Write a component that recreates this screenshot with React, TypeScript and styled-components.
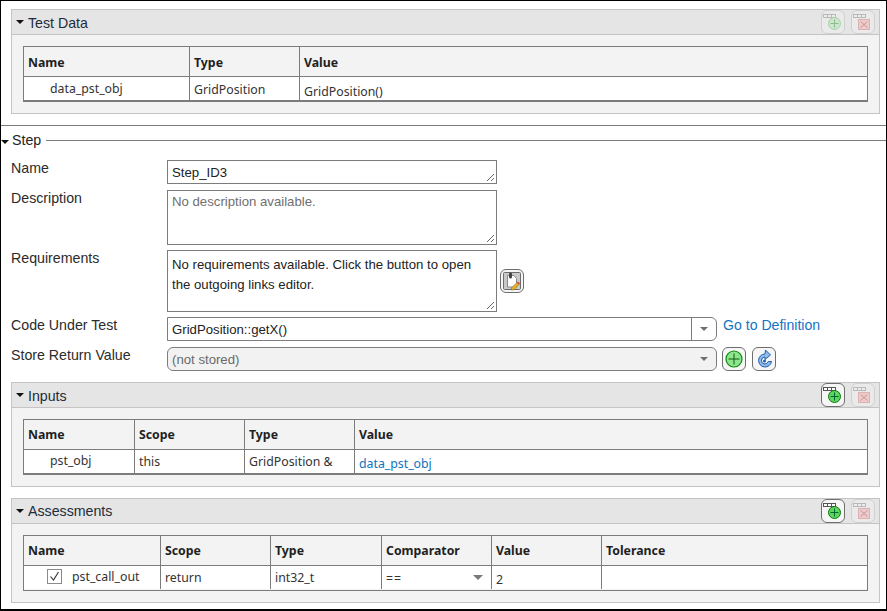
import React from "react";
import styled, { createGlobalStyle } from "styled-components";

const Global = createGlobalStyle`
  html, body { margin: 0; padding: 0; background: #fff; }
  body { font-family: "Liberation Sans", Arial, sans-serif; font-size: 14px; color: #212121; }
  * { box-sizing: border-box; }
`;

const Frame = styled.div`
  width: 887px;
  height: 611px;
  border: 1px solid #000;
  border-bottom-width: 2px;
  background: #fff;
  overflow: hidden;
  display: flex;
  flex-direction: column;
`;

const PanelBox = styled.section<{ $mt: number }>`
  margin: ${p => p.$mt}px 6px 0 10px;
  height: 105px;
  flex: none;
  border: 1px solid #c4c4c4;
  background: #f3f3f3;
`;

const PanelHead = styled.header`
  height: 25px;
  background: #e5e5e5;
  border-bottom: 1px solid #c4c4c4;
  display: flex;
  align-items: center;
  padding: 0 0 0 4px;
  color: #1d2c3a;
  font-size: 14.2px;
`;

const Caret = styled.span`
  width: 0;
  height: 0;
  border-left: 4px solid transparent;
  border-right: 4px solid transparent;
  border-top: 4px solid #111;
  margin-right: 4px;
  flex: none;
`;

const HeadTitle = styled.span<{ $low?: boolean }>`
  flex: 1;
  line-height: 22px;
  padding-top: ${p => (p.$low ? "2px" : "0")};
`;

const HeadTools = styled.div`
  display: flex;
  gap: 6px;
  margin-right: 4px;
  align-self: flex-start;
`;

const IconBtn = styled.button<{ $off?: boolean }>`
  width: 24px;
  height: 24px;
  padding: 0;
  border: 1px solid ${p => (p.$off ? "#c9c9c9" : "#6e6e6e")};
  border-radius: 6px;
  background: ${p => (p.$off ? "#ececec" : "#f6f6f6")};
  display: flex;
  align-items: center;
  justify-content: center;
  opacity: ${p => (p.$off ? 0.75 : 1)};
`;

const PanelBody = styled.div`
  padding: 11px 11px 0 11px;
`;

const Table = styled.div<{ $cols: string; $double?: boolean; $low?: boolean }>`
  display: grid;
  grid-template-columns: ${p => p.$cols};
  border: 1px solid #7c7c7c;
  border-bottom-width: ${p => (p.$double ? "3px" : "2px")};
  ${p => (p.$double ? "border-bottom-style: double;" : "")}
  height: 56px;
  font-family: "Noto Sans", "Open Sans", sans-serif;
  font-size: 12.3px;
  ${p => (p.$low ? "> div { padding-top: 2px; }" : "")}
`;

const Th = styled.div<{ $last?: boolean }>`
  height: 30px;
  border-bottom: 1px solid #7c7c7c;
  border-right: ${p => (p.$last ? "none" : "1px solid #7c7c7c")};
  padding: 0 0 0 4px;
  display: flex;
  align-items: center;
  font-weight: 700;
  color: #1f1f1f;
`;

const Td = styled.div<{ $last?: boolean }>`
  background: #fff;
  border-right: ${p => (p.$last ? "none" : "1px solid #7c7c7c")};
  padding: 0 4px;
  display: flex;
  align-items: center;
  color: #333;
  position: relative;
  height: 23px;
`;

const NameTd = styled(Td)`
  padding-left: 26px;
  padding-bottom: 3px;
`;

const CheckTd = styled(Td)`
  padding-left: 23px;
  gap: 10px;
  padding-bottom: 2px;
`;

const Check = styled.span`
  width: 15px;
  height: 15px;
  border: 1px solid #8a8a8a;
  background: #fff;
  display: flex;
  align-items: center;
  justify-content: center;
`;

const ValueText = styled.span`
  padding-top: 4px;
`;

const LinkValue = styled(ValueText)`
  color: #0e72bd;
`;

const CompareText = styled.span`
  letter-spacing: 1px;
  padding-top: 2px;
`;

const SelArrow = styled.span`
  margin-left: auto;
  margin-right: 4px;
  width: 0;
  height: 0;
  border-left: 5px solid transparent;
  border-right: 5px solid transparent;
  border-top: 5px solid #7a7a7a;
`;

const StepSection = styled.section`
  margin-top: 11px;
  border-top: 1px solid #7c7c7c;
  flex: none;
`;

const Legend = styled.div`
  display: flex;
  align-items: center;
  height: 27px;
  font-size: 14.2px;
  color: #222;
`;

const LegendCaret = styled(Caret)`
  margin: 4px 3px 0 0;
`;

const LegendRule = styled.span`
  flex: 1;
  height: 1px;
  background: #7c7c7c;
  margin: 2px 0 0 5px;
`;

const Form = styled.div`
  display: grid;
  grid-template-columns: 156px 1fr;
  grid-template-rows: 25px 55px 62px 25px 24px;
  row-gap: 5px;
  padding: 7px 0 0 10px;
`;

const Label = styled.div`
  font-size: 14.2px;
  color: #2b2b2b;
  line-height: 16px;
`;

const Row = styled.div`
  display: flex;
  align-items: center;
  gap: 5px;
  height: 24px;
`;

const ToolGroup = styled.div`
  display: flex;
  gap: 6px;
`;

const TextBox = styled.div<{ $h: number; $pt: number; $muted?: boolean }>`
  width: 330px;
  height: ${p => p.$h}px;
  border: 1px solid #7c7c7c;
  padding: ${p => p.$pt}px 20px 0 4px;
  font-size: 13.2px;
  line-height: 20px;
  color: ${p => (p.$muted ? "#6f6f6f" : "#222")};
  position: relative;
  background: #fff;
`;

const Grip = styled.svg`
  position: absolute;
  right: 1px;
  bottom: 1px;
`;

const DropBox = styled.div<{ $w: number; $disabled?: boolean }>`
  width: ${p => p.$w}px;
  height: 24px;
  border: 1px solid #7c7c7c;
  border-radius: ${p => (p.$disabled ? "6px" : "0 6px 6px 0")};
  background: ${p => (p.$disabled ? "#f2f2f2" : "#fff")};
  color: ${p => (p.$disabled ? "#6a6a6a" : "#222")};
  display: flex;
  align-items: center;
  font-size: 13.2px;
  padding-left: 4px;
`;

const DropText = styled.span`
  flex: 1;
  padding-top: 1px;
`;

const DropBtn = styled.span<{ $split?: boolean }>`
  width: 25px;
  height: 100%;
  display: flex;
  align-items: center;
  justify-content: center;
  border-left: ${p => (p.$split ? "1px solid #7c7c7c" : "none")};
`;

const DropArrow = styled.span`
  width: 0;
  height: 0;
  border-left: 4px solid transparent;
  border-right: 4px solid transparent;
  border-top: 4px solid #6f6f6f;
`;

const GoLink = styled.a`
  color: #1473c4;
  font-size: 14.1px;
  line-height: 16px;
  margin-left: 1px;
  align-self: flex-start;
`;

const ReqRow = styled.div`
  display: flex;
  align-items: center;
  gap: 3px;
`;

function RowCells({ stroke, fill }: { stroke: string; fill: string }) {
  return (
    <g fill={fill} stroke={stroke} strokeWidth="1">
      <rect x="1.5" y="3.5" width="4" height="3" />
      <rect x="5.5" y="3.5" width="4" height="3" />
      <rect x="9.5" y="3.5" width="4" height="3" />
    </g>
  );
}

function AddRowIcon({ faded }: { faded?: boolean }) {
  return (
    <svg width="22" height="22" viewBox="0 0 22 22">
      <RowCells stroke={faded ? "#a9a9a9" : "#555"} fill={faded ? "#f0f0f0" : "#fff"} />
      <circle cx="12.500" cy="12.500" r="6" fill={faded ? "#c5e6c5" : "#5cd65c"} stroke={faded ? "#8fcf8f" : "#0b7a0b"} />
      <path d="M12.500 8.500v8M8.500 12.500h8" stroke={faded ? "#6fae6f" : "#063"} strokeWidth="1" />
    </svg>
  );
}

function DelRowIcon() {
  return (
    <svg width="22" height="22" viewBox="0 0 22 22">
      <RowCells stroke="#a9a9a9" fill="#f0f0f0" />
      <rect x="6.500" y="8.500" width="11" height="10" fill="#f3c2c2" stroke="#dba0a0" />
      <path d="M8.500 10.500l7 6M15.500 10.500l-7 6" stroke="#b88080" strokeWidth="1" />
    </svg>
  );
}

function NoteIcon() {
  return (
    <svg width="20" height="20" viewBox="0 0 20 20">
      <rect x="1.500" y="1.500" width="17" height="17" rx="1" fill="#c9c9c9" stroke="#6b6b6b" />
      <path d="M5.500 4.500h6.500l2.500 3v8.500h-9z" fill="#fff" stroke="#888" />
      <rect x="7" y="1.500" width="3" height="6" rx="1.500" fill="#444" />
      <path d="M9.500 17l5.500-5.500 2 2-5.500 5.500h-2z" fill="#e6b422" stroke="#8a6a10" strokeWidth=".6" />
      <path d="M15 11.500l1-1 2 2-1 1z" fill="#d9404a" />
    </svg>
  );
}

function PlusIcon() {
  return (
    <svg width="20" height="20" viewBox="0 0 20 20">
      <circle cx="10" cy="10" r="8" fill="#8fe58f" stroke="#0c8a0c" strokeWidth="1.200" />
      <path d="M10 4.500v11M4.500 10h11" stroke="#0a5f0a" strokeWidth="1" />
    </svg>
  );
}

function RefreshIcon() {
  return (
    <svg width="20" height="20" viewBox="0 0 20 20">
      <path d="M11 5a6.500 6.500 0 1 0 6.500 7.500h-3.200a3.500 3.500 0 1 1-3.300-4.500v2.500l5.500-4.500-5-5z" fill="#8fbcea" stroke="#1d5fae" strokeWidth="1" />
      <circle cx="10.500" cy="12" r="1.500" fill="#1d5fae" />
    </svg>
  );
}

function GripMark() {
  return (
    <Grip width="9" height="9" viewBox="0 0 9 9">
      <path d="M1 8l7-7M5 8l3-3" stroke="#666" strokeWidth="1" />
    </Grip>
  );
}

function Panel({ title, mt, active, low, children }: { title: string; mt: number; active?: boolean; low?: boolean; children: React.ReactNode }) {
  return (
    <PanelBox $mt={mt}>
      <PanelHead>
        <Caret />
        <HeadTitle $low={low}>{title}</HeadTitle>
        <HeadTools>
          <IconBtn $off={!active}><AddRowIcon faded={!active} /></IconBtn>
          <IconBtn $off><DelRowIcon /></IconBtn>
        </HeadTools>
      </PanelHead>
      <PanelBody>{children}</PanelBody>
    </PanelBox>
  );
}

export default function App() {
  return (
    <Frame>
      <Global />
      <Panel title="Test Data" mt={8} low>
        <Table $low $cols="166px 110px 1fr">
          <Th>Name</Th>
          <Th>Type</Th>
          <Th $last>Value</Th>
          <NameTd>data_pst_obj</NameTd>
          <Td>GridPosition</Td>
          <Td $last><ValueText>GridPosition()</ValueText></Td>
        </Table>
      </Panel>

      <StepSection>
        <Legend>
          <LegendCaret />
          Step
          <LegendRule />
        </Legend>
        <Form>
          <Label>Name</Label>
          <TextBox $h={24} $pt={2}>Step_ID3<GripMark /></TextBox>
          <Label>Description</Label>
          <TextBox $h={55} $pt={1} $muted>No description available.<GripMark /></TextBox>
          <Label>Requirements</Label>
          <ReqRow>
            <TextBox $h={62} $pt={4}>
              No requirements available. Click the button to open the outgoing links editor.
              <GripMark />
            </TextBox>
            <IconBtn><NoteIcon /></IconBtn>
          </ReqRow>
          <Label>Code Under Test</Label>
          <Row>
            <DropBox $w={550}>
              <DropText>GridPosition::getX()</DropText>
              <DropBtn $split><DropArrow /></DropBtn>
            </DropBox>
            <GoLink>Go to Definition</GoLink>
          </Row>
          <Label>Store Return Value</Label>
          <Row>
            <DropBox $w={550} $disabled>
              <DropText>(not stored)</DropText>
              <DropBtn><DropArrow /></DropBtn>
            </DropBox>
            <ToolGroup>
              <IconBtn><PlusIcon /></IconBtn>
              <IconBtn><RefreshIcon /></IconBtn>
            </ToolGroup>
          </Row>
        </Form>
      </StepSection>

      <Panel title="Inputs" mt={11} active low>
        <Table $cols="111px 110px 110px 1fr">
          <Th>Name</Th>
          <Th>Scope</Th>
          <Th>Type</Th>
          <Th $last>Value</Th>
          <NameTd>pst_obj</NameTd>
          <Td>this</Td>
          <Td>GridPosition &amp;</Td>
          <Td $last><LinkValue>data_pst_obj</LinkValue></Td>
        </Table>
      </Panel>

      <Panel title="Assessments" mt={11} active>
        <Table $double $cols="137px 110px 111px 110px 110px 1fr">
          <Th>Name</Th>
          <Th>Scope</Th>
          <Th>Type</Th>
          <Th>Comparator</Th>
          <Th>Value</Th>
          <Th $last>Tolerance</Th>
          <CheckTd>
            <Check>
              <svg width="11" height="11" viewBox="0 0 11 11">
                <path d="M1.500 5.500l3 3.500 5-8" fill="none" stroke="#333" strokeWidth="1.100" />
              </svg>
            </Check>
            pst_call_out
          </CheckTd>
          <Td>return</Td>
          <Td>int32_t</Td>
          <Td><CompareText>==</CompareText><SelArrow /></Td>
          <Td><ValueText>2</ValueText></Td>
          <Td $last />
        </Table>
      </Panel>
    </Frame>
  );
}
